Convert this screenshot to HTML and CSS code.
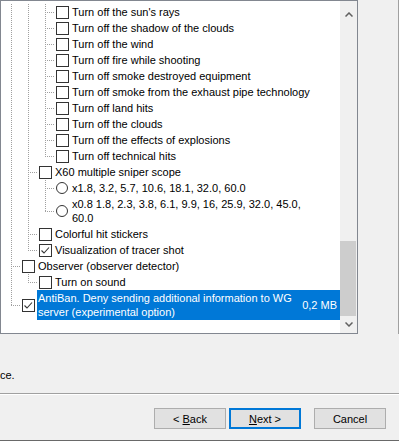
FILE: index.html
```html
<!DOCTYPE html>
<html lang="en">
  <head>
    <meta charset="UTF-8" />
    <title>Setup - Components</title>
    <link rel="stylesheet" href="styles.css">
  </head>
  <body>
    <div class="top">
      <div class="listbox">
        <div class="tree">
          <div class="row"><span class="guide pipe"></span><span class="guide pipe"></span><span class="guide tee"></span><span class="check"></span><span class="label">Turn off the sun's rays</span></div>
          <div class="row"><span class="guide pipe"></span><span class="guide pipe"></span><span class="guide tee"></span><span class="check"></span><span class="label">Turn off the shadow of the clouds</span></div>
          <div class="row"><span class="guide pipe"></span><span class="guide pipe"></span><span class="guide tee"></span><span class="check"></span><span class="label">Turn off the wind</span></div>
          <div class="row"><span class="guide pipe"></span><span class="guide pipe"></span><span class="guide tee"></span><span class="check"></span><span class="label">Turn off fire while shooting</span></div>
          <div class="row"><span class="guide pipe"></span><span class="guide pipe"></span><span class="guide tee"></span><span class="check"></span><span class="label">Turn off smoke destroyed equipment</span></div>
          <div class="row"><span class="guide pipe"></span><span class="guide pipe"></span><span class="guide tee"></span><span class="check"></span><span class="label">Turn off smoke from the exhaust pipe technology</span></div>
          <div class="row"><span class="guide pipe"></span><span class="guide pipe"></span><span class="guide tee"></span><span class="check"></span><span class="label">Turn off land hits</span></div>
          <div class="row"><span class="guide pipe"></span><span class="guide pipe"></span><span class="guide tee"></span><span class="check"></span><span class="label">Turn off the clouds</span></div>
          <div class="row"><span class="guide pipe"></span><span class="guide pipe"></span><span class="guide tee"></span><span class="check"></span><span class="label">Turn off the effects of explosions</span></div>
          <div class="row"><span class="guide pipe"></span><span class="guide pipe"></span><span class="guide elbow"></span><span class="check"></span><span class="label">Turn off technical hits</span></div>
          <div class="row"><span class="guide pipe"></span><span class="guide tee"></span><span class="check"></span><span class="label">X60 multiple sniper scope</span></div>
          <div class="row"><span class="guide pipe"></span><span class="guide pipe"></span><span class="guide tee"></span><span class="radio"></span><span class="label">x1.8, 3.2, 5.7, 10.6, 18.1, 32.0, 60.0</span></div>
          <div class="row tall"><span class="guide pipe"></span><span class="guide pipe"></span><span class="guide elbow"></span><span class="radio"></span><span class="label">x0.8 1.8, 2.3, 3.8, 6.1, 9.9, 16, 25.9, 32.0, 45.0,<br>60.0</span></div>
          <div class="row"><span class="guide pipe"></span><span class="guide tee"></span><span class="check"></span><span class="label">Colorful hit stickers</span></div>
          <div class="row"><span class="guide pipe"></span><span class="guide elbow"></span><span class="check checked"><svg viewBox="0 0 13 13" width="13" height="13"><path d="M2.5 6.5 L5 9 L10 3.5" fill="none" stroke="#333" stroke-width="1.1"/></svg></span><span class="label">Visualization of tracer shot</span></div>
          <div class="row"><span class="guide tee"></span><span class="check"></span><span class="label">Observer (observer detector)</span></div>
          <div class="row"><span class="guide pipe"></span><span class="guide elbow"></span><span class="check"></span><span class="label">Turn on sound</span></div>
          <div class="row tall selected"><span class="guide elbow"></span><span class="check checked"><svg viewBox="0 0 13 13" width="13" height="13"><path d="M2.5 6.5 L5 9 L10 3.5" fill="none" stroke="#333" stroke-width="1.1"/></svg></span><span class="label">AntiBan. Deny sending additional information to WG<br>server (experimental option)<span class="size">0,2 MB</span></span></div>
        </div>
        <div class="scrollbar">
          <div class="sb-btn sb-up"><svg viewBox="0 0 8 5" width="8" height="5"><path d="M0.5 4.5 L4 1 L7.5 4.5" fill="none" stroke="#606060" stroke-width="1.5"/></svg></div>
          <div class="sb-track"><div class="sb-thumb"></div></div>
          <div class="sb-btn"><svg viewBox="0 0 8 5" width="8" height="5"><path d="M0.5 0.5 L4 4 L7.5 0.5" fill="none" stroke="#606060" stroke-width="1.5"/></svg></div>
        </div>
      </div>
      <div class="side"></div>
    </div>

    <p class="hint">ce.</p>

    <div class="separator"></div>

    <div class="buttons">
      <button class="btn">&lt; <u>B</u>ack</button>
      <button class="btn btn-default"><u>N</u>ext &gt;</button>
      <button class="btn btn-cancel">Cancel</button>
    </div>

    <div class="frame-bottom"></div>
  </body>
</html>
```

FILE: styles.css
```css
* {
  margin: 0;
  padding: 0;
  box-sizing: border-box;
}

body {
  width: 399px;
  height: 441px;
  overflow: hidden;
  background-color: #f0f0f0;
  color: #000;
  font-family: "Liberation Sans", Arial, sans-serif;
  font-size: 11px;
  line-height: 14px;
}

.top {
  display: flex;
  height: 334px;
}

.listbox {
  width: 358px;
  height: 334px;
  display: flex;
  border: 1px solid #828790;
  background-color: white;
}

.side {
  flex: 1;
  height: 334px;
  border-right: 1px solid #a0a0a0;
}

.tree {
  flex: 1;
  padding: 3px 0 0 2px;
  overflow: hidden;
}

.row {
  display: flex;
  align-items: center;
  height: 16px;
  white-space: nowrap;
}

.row.tall {
  height: 30px;
}

.guide {
  flex: none;
  width: 17px;
  align-self: stretch;
}

.pipe {
  background: repeating-linear-gradient(to bottom, #a0a0a0 0 1px, transparent 1px 2px) 8px 0 / 1px 100% no-repeat;
}

.tee {
  background:
    repeating-linear-gradient(to bottom, #a0a0a0 0 1px, transparent 1px 2px) 8px 0 / 1px 100% no-repeat,
    repeating-linear-gradient(to right, #a0a0a0 0 1px, transparent 1px 2px) 8px calc(50% + 0.5px) / 9px 1px no-repeat;
}

.elbow {
  background:
    repeating-linear-gradient(to bottom, #a0a0a0 0 1px, transparent 1px 2px) 8px 0 / 1px calc(50% + 1px) no-repeat,
    repeating-linear-gradient(to right, #a0a0a0 0 1px, transparent 1px 2px) 8px calc(50% + 0.5px) / 9px 1px no-repeat;
}

.check,
.radio {
  flex: none;
  width: 13px;
  height: 13px;
  margin: 0 2px;
  border: 1px solid #333;
  background-color: white;
}

.check svg {
  display: block;
  margin: -1px;
}

.radio {
  width: 12px;
  height: 12px;
  margin: 0 3px 0 2px;
  border-radius: 50%;
}

.label {
  padding: 0 1px;
}

.selected .label {
  flex: 1;
  align-self: stretch;
  position: relative;
  padding: 1px 1px;
  background-color: #0078d7;
  color: white;
}

.size {
  position: absolute;
  right: 3px;
  top: 8px;
}

.scrollbar {
  flex: none;
  width: 17px;
  display: flex;
  flex-direction: column;
  background-color: #f0f0f0;
}

.sb-btn {
  height: 17px;
  display: flex;
  justify-content: center;
  align-items: center;
}

.sb-btn svg {
  display: block;
}

.sb-up {
  height: 24px;
  padding-top: 2px;
}

.sb-track {
  flex: 1;
  display: flex;
  flex-direction: column;
  justify-content: flex-end;
  padding-right: 1px;
}

.sb-thumb {
  height: 75px;
  background-color: #cdcdcd;
}

.hint {
  margin-top: 34px;
  height: 14px;
}

.separator {
  margin-top: 11px;
  height: 2px;
  border-top: 1px solid #a0a0a0;
  border-bottom: 1px solid #fff;
}

.buttons {
  display: flex;
  justify-content: flex-end;
  gap: 3px;
  margin-top: 13px;
  padding-right: 13px;
}

.btn {
  width: 72px;
  height: 21px;
  font-family: inherit;
  font-size: 11px;
  color: #000;
  background-color: #e1e1e1;
  border: 1px solid #adadad;
}

.btn-default {
  border: 2px solid #0078d7;
}

.btn-cancel {
  margin-left: 10px;
}

.frame-bottom {
  margin-top: 11px;
  height: 1px;
  background-color: #696969;
}
```
